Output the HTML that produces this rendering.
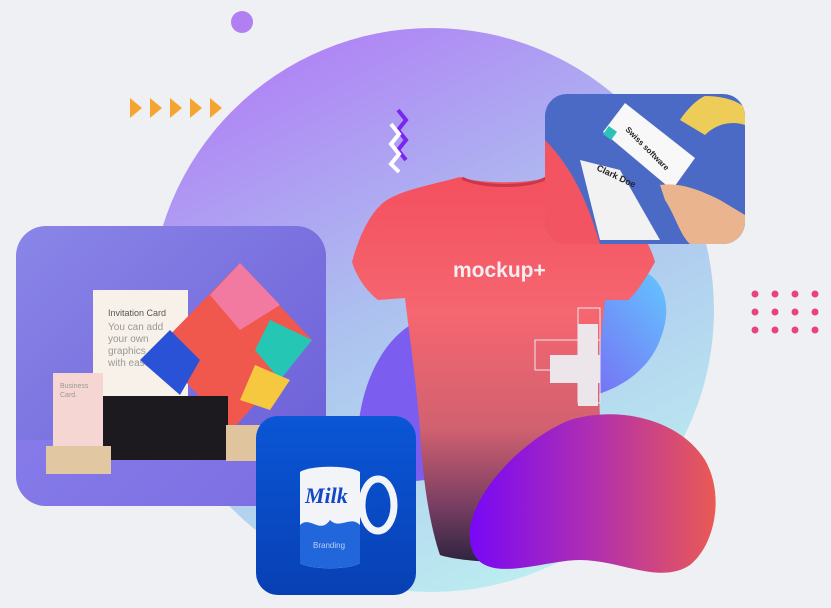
<!DOCTYPE html>
<html><head><meta charset="utf-8"><style>
html,body{margin:0;padding:0;width:831px;height:608px;overflow:hidden;background:#eff0f4;font-family:"Liberation Sans",sans-serif}
svg{display:block}
</style></head><body>
<svg width="831" height="608" viewBox="0 0 831 608" xmlns="http://www.w3.org/2000/svg">
<defs>
<linearGradient id="bg" x1="0.2" y1="0" x2="0.7" y2="1"><stop offset="0" stop-color="#b07cf6"/><stop offset="0.5" stop-color="#adc3ef"/><stop offset="1" stop-color="#bdeff0"/></linearGradient>
<linearGradient id="lc" x1="0" y1="0" x2="1" y2="1"><stop offset="0" stop-color="#8a86e8"/><stop offset="1" stop-color="#6a5cd6"/></linearGradient>
<linearGradient id="sh" x1="0" y1="0" x2="0" y2="1"><stop offset="0" stop-color="#f4505e"/><stop offset="0.35" stop-color="#f56670"/><stop offset="0.65" stop-color="#d26170"/><stop offset="0.85" stop-color="#7a3f63"/><stop offset="1" stop-color="#2e2440"/></linearGradient>
<linearGradient id="bl" x1="0" y1="0" x2="1" y2="0"><stop offset="0" stop-color="#7808f6"/><stop offset="0.5" stop-color="#b02fb0"/><stop offset="1" stop-color="#ea5a54"/></linearGradient>
<linearGradient id="bb" x1="0" y1="1" x2="1" y2="0"><stop offset="0" stop-color="#7c5cf2"/><stop offset="1" stop-color="#62c8ff"/></linearGradient>
<linearGradient id="mg" x1="0" y1="0" x2="0" y2="1"><stop offset="0" stop-color="#0a56d6"/><stop offset="1" stop-color="#0840b4"/></linearGradient>
<clipPath id="c1"><rect x="16" y="226" width="310" height="280" rx="30"/></clipPath>
<clipPath id="c2"><rect x="545" y="94" width="200" height="150" rx="22"/></clipPath>
</defs>
<circle cx="242" cy="22" r="11" fill="#b27ff2"/>
<circle cx="432" cy="310" r="282" fill="url(#bg)"/>
<g fill="#f6a431">
<polygon points="130,98 142,108 130,118"/><polygon points="150,98 162,108 150,118"/><polygon points="170,98 182,108 170,118"/><polygon points="190,98 202,108 190,118"/><polygon points="210,98 222,108 210,118"/></g>
<polyline points="398,110 406,120 398,130 406,140 398,150 406,160" fill="none" stroke="#7a26f0" stroke-width="4"/>
<polyline points="391,124 399,134 391,144 399,154 391,164 399,172" fill="none" stroke="#fff" stroke-width="4"/>
<g fill="#e8447a">
<circle cx="755" cy="294" r="3.5"/><circle cx="775" cy="294" r="3.5"/><circle cx="795" cy="294" r="3.5"/><circle cx="815" cy="294" r="3.5"/>
<circle cx="755" cy="312" r="3.5"/><circle cx="775" cy="312" r="3.5"/><circle cx="795" cy="312" r="3.5"/><circle cx="815" cy="312" r="3.5"/>
<circle cx="755" cy="330" r="3.5"/><circle cx="775" cy="330" r="3.5"/><circle cx="795" cy="330" r="3.5"/><circle cx="815" cy="330" r="3.5"/></g>
<path d="M600,270 C650,255 680,290 660,340 C645,380 600,400 560,400 L560,300 Z" fill="url(#bb)"/>
<path d="M420,320 C385,335 362,380 358,430 C356,460 362,480 380,485 L425,480 L425,320 Z" fill="#7b5ef0"/>
<!-- t-shirt -->
<path d="M460,177 C480,184 530,184 548,177 C575,185 610,190 622,202 C640,225 652,250 655,262 C645,280 635,295 628,300 L605,300 C600,340 598,380 600,420 C602,470 598,520 590,550 C560,565 470,565 440,555 C428,520 422,470 420,430 C416,380 410,340 405,298 L378,300 C365,290 356,275 352,262 C358,240 368,215 384,202 C400,190 435,184 460,177 Z" fill="url(#sh)"/>
<path d="M462,178 C480,188 530,188 546,178" fill="none" stroke="#c8384a" stroke-width="3"/>
<text x="453" y="277" font-size="21" font-weight="bold" fill="#f4eef2">mockup+</text>
<rect x="578" y="308" width="22" height="95" fill="none" stroke="#f0e8ee" stroke-width="1"/>
<rect x="535" y="340" width="65" height="30" fill="none" stroke="#f0e8ee" stroke-width="1"/>
<rect x="578" y="324" width="20" height="82" fill="#ece6ea"/>
<rect x="550" y="355" width="50" height="28" fill="#ece6ea"/>
<!-- left card -->
<g clip-path="url(#c1)">
<rect x="16" y="226" width="310" height="280" fill="url(#lc)"/>
<rect x="16" y="440" width="310" height="70" fill="#8e7ff0" opacity="0.5"/>
<rect x="93" y="290" width="95" height="140" fill="#f7f1ea"/>
<text x="108" y="316" font-size="9" fill="#555">Invitation Card</text>
<text x="108" y="330" font-size="10" fill="#999">You can add</text>
<text x="108" y="342" font-size="10" fill="#999">your own</text>
<text x="108" y="354" font-size="10" fill="#999">graphics</text>
<text x="108" y="366" font-size="10" fill="#999">with ease</text>
<polygon points="240,263 312,340 232,430 155,350" fill="#f0584e"/>
<polygon points="240,263 280,305 240,330 210,295" fill="#f27aa0"/>
<polygon points="270,320 312,340 280,380 255,350" fill="#25c6b4"/>
<polygon points="170,330 200,360 180,395 140,360" fill="#2a52d6"/>
<polygon points="255,365 290,380 270,410 240,400" fill="#f5c840"/>
<rect x="100" y="396" width="128" height="64" fill="#1c1a1e"/>
<rect x="53" y="373" width="50" height="77" fill="#f6d6d3"/>
<text x="60" y="388" font-size="7" fill="#999">Business</text>
<text x="60" y="397" font-size="7" fill="#999">Card.</text>
<rect x="46" y="446" width="65" height="28" fill="#e2c8a2"/>
<rect x="226" y="425" width="40" height="36" fill="#e0c49e"/>
</g>
<!-- top right card -->
<g clip-path="url(#c2)">
<rect x="545" y="94" width="200" height="150" fill="#4a6ac5"/>
<path d="M545,140 C575,170 590,210 600,244 L545,244 Z" fill="#f25462"/>
<path d="M705,96 C730,96 745,105 745,110 L745,125 C730,120 715,125 705,135 L680,120 C690,105 700,98 705,96 Z" fill="#eecc58"/>
<polygon points="580,160 620,170 660,240 600,240" fill="#f2f2f2"/>
<polygon points="603,132 625,103 695,158 672,190" fill="#f8f8f8"/>
<rect x="605" y="128" width="10" height="10" fill="#2cc2b8" transform="rotate(35 610 133)"/>
<text x="596" y="170" font-size="9" font-weight="bold" fill="#222" transform="rotate(25 596 170)">Clark Doe</text>
<text x="625" y="130" font-size="8" font-weight="bold" fill="#222" transform="rotate(45 625 130)">Swiss software</text>
<path d="M660,185 C680,182 700,190 720,200 L745,215 L745,244 L690,244 C680,235 675,215 665,200 Z" fill="#e9b48e"/>
</g>
<!-- blob -->
<path d="M470,540 C465,500 520,440 570,420 C620,405 680,420 705,460 C725,495 715,545 690,565 C660,585 620,560 580,560 C540,560 475,590 470,540 Z" fill="url(#bl)"/>
<!-- mug card -->
<rect x="256" y="416" width="160" height="179" rx="22" fill="url(#mg)"/>
<path d="M300,472 C310,465 350,465 360,472 L360,563 C350,570 310,570 300,563 Z" fill="#f2f4f8"/>
<path d="M300,525 C310,515 320,535 330,520 C340,530 350,515 360,525 L360,563 C350,570 310,570 300,563 Z" fill="#2266dc"/>
<ellipse cx="378" cy="505" rx="16" ry="26" fill="none" stroke="#f2f4f8" stroke-width="7"/>
<text x="305" y="503" font-size="22" font-style="italic" font-weight="bold" font-family="Liberation Serif,serif" fill="#1446c8">Milk</text>
<text x="313" y="548" font-size="8" fill="#bcd0f5">Branding</text>
</svg>
</body></html>
